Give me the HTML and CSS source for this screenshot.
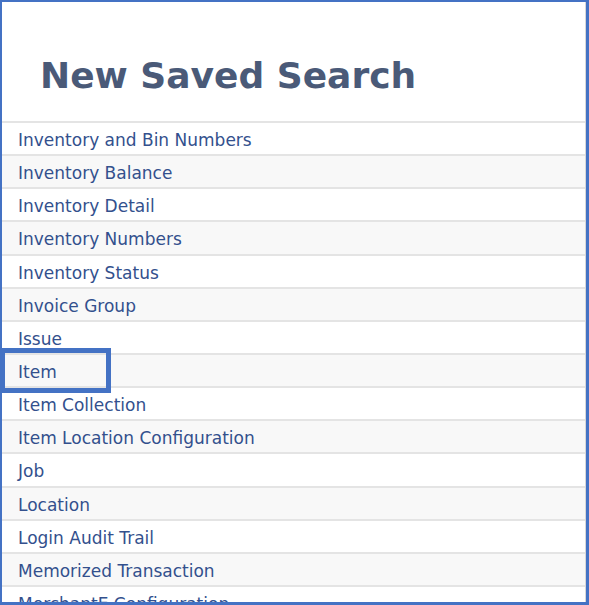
FILE: index.html
```html
<!DOCTYPE html>
<html>
<head>
<meta charset="utf-8">
<link rel="stylesheet" href="styles.css">
</head>
<body>
<div class="frame">
  <div class="panel">
    <div class="header"><h1 class="title">New Saved Search</h1></div>
    <ul class="list">
      <li class="row">Inventory and Bin Numbers</li>
      <li class="row">Inventory Balance</li>
      <li class="row">Inventory Detail</li>
      <li class="row">Inventory Numbers</li>
      <li class="row">Inventory Status</li>
      <li class="row">Invoice Group</li>
      <li class="row">Issue</li>
      <li class="row row-marked">Item<span class="mark"></span></li>
      <li class="row">Item Collection</li>
      <li class="row">Item Location Configuration</li>
      <li class="row">Job</li>
      <li class="row">Location</li>
      <li class="row">Login Audit Trail</li>
      <li class="row">Memorized Transaction</li>
      <li class="row">MerchantE Configuration</li>
    </ul>
  </div>
</div>
</body>
</html>
```
FILE: styles.css
```css
html, body {
  margin: 0;
  padding: 0;
  background: #ffffff;
}
.frame {
  box-sizing: border-box;
  width: 589px;
  height: 605px;
  border: 2px solid #4472c4;
  border-right-width: 3px;
  border-bottom-width: 3px;
  overflow: hidden;
}
.panel {
  height: 100%;
  border-right: 1px solid #d8d8d8;
  box-sizing: border-box;
  overflow: hidden;
}
.header {
  height: 119px;
  padding-left: 38px;
  box-sizing: border-box;
  display: flex;
  align-items: flex-end;
  padding-bottom: 25px;
}
.title {
  margin: 0;
  font-family: "DejaVu Sans", Verdana, sans-serif;
  font-weight: bold;
  font-size: 36px;
  line-height: 40px;
  color: #4a5a78;
}
.list {
  list-style: none;
  margin: 0;
  padding: 0;
}
.row {
  height: 33.15px;
  box-sizing: border-box;
  border-top: 2px solid #e4e4e4;
  padding-left: 16px;
  padding-top: 3px;
  display: flex;
  align-items: center;
  font-family: "DejaVu Sans", Verdana, sans-serif;
  font-size: 17px;
  color: #33508d;
}
.row:nth-child(even) {
  background: #f8f8f8;
}
.row-marked {
  position: relative;
}
.mark {
  position: absolute;
  z-index: 1;
  left: -2px;
  top: -7px;
  width: 111px;
  height: 45px;
  box-sizing: border-box;
  border: 5px solid #4472c4;
}
```
